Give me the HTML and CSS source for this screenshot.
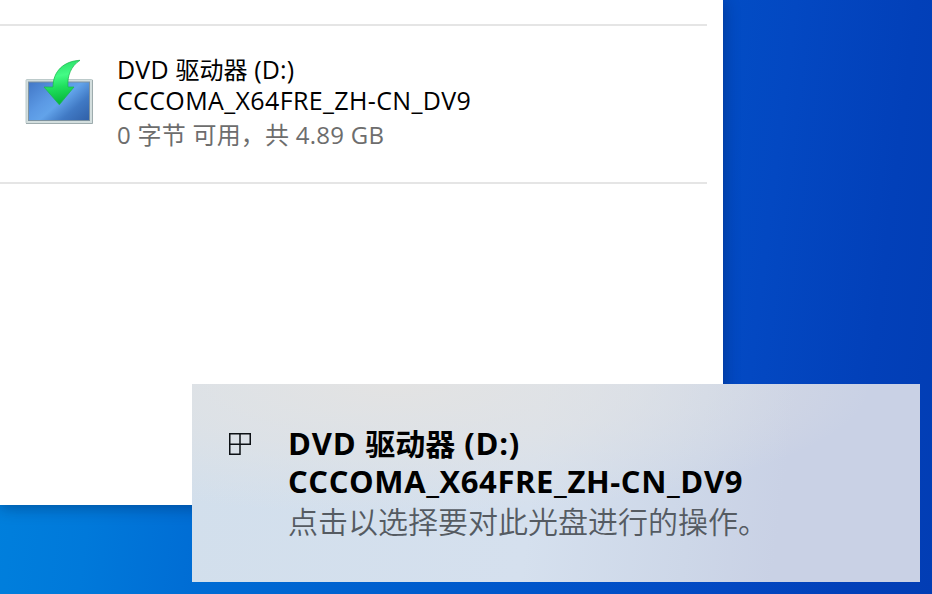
FILE: index.html
```html
<!DOCTYPE html>
<html lang="zh-CN">
<head>
<meta charset="utf-8">
<title>DVD 驱动器</title>
<link rel="stylesheet" href="styles.css">
</head>
<body>
<main class="desktop">
  <section class="window">
    <div class="drive">
      <svg class="drive-icon" viewBox="0 0 70 68" width="70" height="68" aria-hidden="true">
        <defs>
          <linearGradient id="screen" gradientUnits="userSpaceOnUse" x1="14" y1="18" x2="56" y2="66">
            <stop offset="0" stop-color="#447ac9"/>
            <stop offset=".35" stop-color="#5b99e4"/>
            <stop offset=".52" stop-color="#62a3ea"/>
            <stop offset=".75" stop-color="#4079c4"/>
            <stop offset="1" stop-color="#3263ab"/>
          </linearGradient>
          <linearGradient id="arrow" x1="0" y1="0" x2=".15" y2="1">
            <stop offset="0" stop-color="#22d860"/>
            <stop offset=".4" stop-color="#44fb86"/>
            <stop offset=".65" stop-color="#1fdf5c"/>
            <stop offset="1" stop-color="#08b83c"/>
          </linearGradient>
        </defs>
        <rect x="2" y="20.500" width="66.500" height="44" rx="1" fill="#d3dede" stroke="#bccaca"/>
        <path d="M2 64.500H68.500V21" fill="none" stroke="#9eacae"/>
        <rect x="4.500" y="23" width="61" height="38.500" fill="url(#screen)" stroke="#7e929f"/>
        <path d="M56 1.300C40 2 29 12 29 28H20L35.300 45.800 50 28H44C43 17 47 7 56 1.300Z" fill="url(#arrow)" stroke="#19b64b" stroke-width=".7"/>
      </svg>
      <div class="drive-text">
        <p class="name"><span class="latin">DVD </span>驱动器<span class="latin"> (D:)</span></p>
        <p class="label">CCCOMA_X64FRE_ZH-CN_DV9</p>
        <p class="space">0 字节 可用，共 4.89 GB</p>
      </div>
    </div>
  </section>
  <aside class="toast">
    <svg class="toast-icon" viewBox="0 0 24 24" width="24" height="24" fill="none" stroke="#0c1014" stroke-width="1.500" aria-hidden="true">
      <path d="M1.750 1.750H22.250V12.250H1.750ZM12 1.750V22.250H1.750V12"/>
    </svg>
    <div class="toast-text">
      <p class="toast-title"><span class="latin">DVD </span>驱动器<span class="latin"> (D:)</span></p>
      <p class="toast-label">CCCOMA_X64FRE_ZH-CN_DV9</p>
      <p class="toast-message">点击以选择要对此光盘进行的操作。</p>
    </div>
  </aside>
</main>
</body>
</html>
```
FILE: styles.css
```css
* { box-sizing: border-box; }
body, p { margin: 0; }
body { overflow: hidden; font-family: "Open Sans", "Noto Sans CJK SC", sans-serif; }
p { white-space: nowrap; }
.desktop {
  position: relative;
  width: 932px;
  height: 594px;
  overflow: hidden;
  background: linear-gradient(97deg, #0083de 0, #0079da 150px, #006cd4 270px, #0055ca 600px, #0348c2 790px, #0240b9 910px, #023db4 100%);
}
.window {
  position: absolute;
  left: 0;
  top: 0;
  width: 723px;
  height: 505px;
  padding: 24px 16px 0 0;
  background: #fff;
  box-shadow: 0 2px 15px rgba(0, 20, 60, .4);
}
.drive {
  display: flex;
  height: 160px;
  padding: 35px 0 0 24px;
  border: solid #e5e5e5;
  border-width: 2px 0;
}
.drive-icon { flex: none; margin-top: -2px; }
.drive-text { margin-left: 23px; font-size: 24px; color: #000; }
.name { height: 31px; line-height: 31px; margin-top: -7px; }
.name .latin { font-size: 25px; letter-spacing: .2px; }
.label { height: 32px; line-height: 30px; font-size: 25px; letter-spacing: .37px; }
.space { height: 36px; line-height: 36px; color: #6d6d6d; letter-spacing: .24px; }
.toast {
  position: absolute;
  left: 192px;
  top: 384px;
  width: 728px;
  height: 198px;
  display: flex;
  padding: 40px 0 0 36px;
  background:
    radial-gradient(ellipse 480px 130px at 200px 0, #e3e3e3, rgba(227, 227, 227, .6) 50%, rgba(227, 227, 227, 0)),
    linear-gradient(97deg, #d2dfec 0, #d5e0ee 350px, #cdd7e8 510px, #c9d1e5 600px, #c9d1e5 100%);
}
.toast-icon { flex: none; margin-top: 8px; }
.toast-text { margin-left: 36px; font-size: 30px; color: #000; }
.toast-title { height: 38px; line-height: 38px; font-weight: 700; }
.toast-title .latin { font-size: 31px; letter-spacing: .8px; }
.toast-label { height: 38px; line-height: 38px; font-weight: 700; font-size: 31px; letter-spacing: .6px; }
.toast-message { height: 42px; line-height: 44px; color: #555b62; font-weight: 350; }
```
